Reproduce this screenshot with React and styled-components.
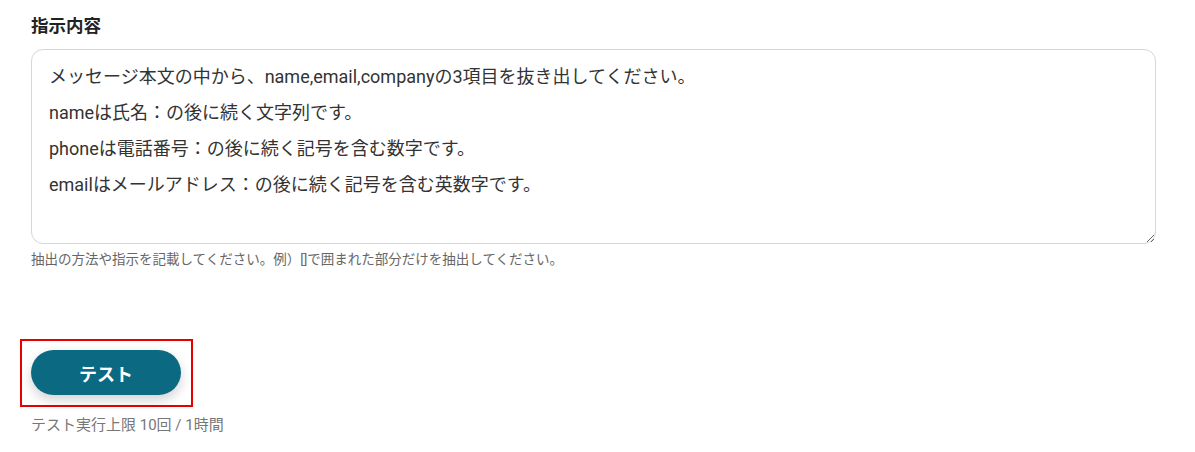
import React from 'react';
import styled, { createGlobalStyle } from 'styled-components';

const GlobalStyle = createGlobalStyle`
  body {
    margin: 0;
    background: #fff;
    font-family: Roboto, "Noto Sans CJK JP", sans-serif;
    color: #333;
  }
`;

const Page = styled.div`
  padding: 14px 39px 0 31px;
`;

const Label = styled.div`
  font-size: 17.5px;
  font-weight: 700;
  color: #222;
  line-height: 24px;
  margin-bottom: 11px;
`;

const TextArea = styled.textarea`
  display: block;
  box-sizing: border-box;
  width: 100%;
  height: 195px;
  padding: 9px 17px;
  border: 1px solid #d3d6db;
  border-radius: 12px;
  font-family: Roboto, "Noto Sans CJK JP", sans-serif;
  font-size: 18px;
  line-height: 36px;
  color: #333;
  resize: vertical;
  outline: none;
  background: #fff;
`;

const Help = styled.div`
  margin-top: 5px;
  font-size: 13.5px;
  line-height: 20px;
  color: #666;
`;

const Highlight = styled.div`
  display: inline-block;
  margin: 70px 0 0 -11px;
  padding: 9px 10px 10px 9px;
  border: 2px solid #e60000;
`;

const TestButton = styled.button`
  display: flex;
  align-items: center;
  justify-content: center;
  width: 150px;
  height: 45px;
  border: none;
  border-radius: 23px;
  background: #0b6a82;
  color: #fff;
  font-family: Roboto, "Noto Sans CJK JP", sans-serif;
  font-size: 18px;
  font-weight: 700;
  box-shadow: 0 5px 12px rgba(0, 0, 0, 0.18);
  cursor: pointer;
`;

const Limit = styled.div`
  margin-top: 7px;
  font-size: 15px;
  line-height: 22px;
  color: #777;
`;

const text = `メッセージ本文の中から、name,email,companyの3項目を抜き出してください。
nameは氏名：の後に続く文字列です。
phoneは電話番号：の後に続く記号を含む数字です。
emailはメールアドレス：の後に続く記号を含む英数字です。`;

export default function App() {
  return (
    <>
      <GlobalStyle />
      <Page>
        <Label>指示内容</Label>
        <TextArea defaultValue={text} />
        <Help>抽出の方法や指示を記載してください。例）[]で囲まれた部分だけを抽出してください。</Help>
        <Highlight>
          <TestButton>テスト</TestButton>
        </Highlight>
        <Limit>テスト実行上限 10回 / 1時間</Limit>
      </Page>
    </>
  );
}
